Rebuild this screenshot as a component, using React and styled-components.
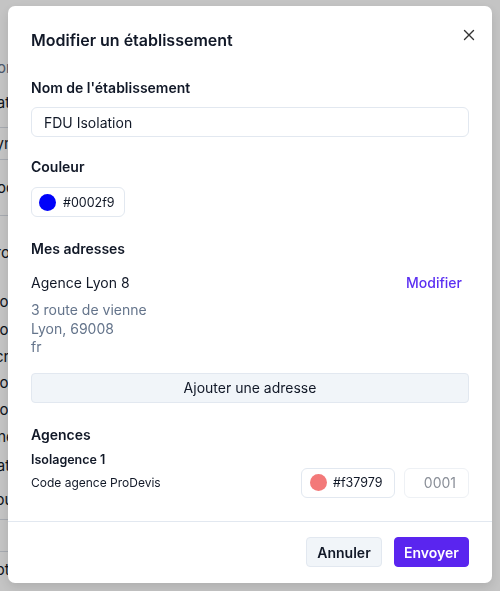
import styled, { createGlobalStyle } from 'styled-components'

const GlobalStyle = createGlobalStyle`
  * { box-sizing: border-box; }
  html, body {
    margin: 0;
    padding: 0;
    height: 100%;
    overflow: hidden;
    font-family: 'Inter', 'Noto Sans', sans-serif;
    color: #111827;
    background: #ffffff;
  }
`

const Page = styled.div`
  display: flex;
  flex-direction: column;
  padding-top: 56px;
  margin-left: -14px;
  width: 200px;
`

const PageRow = styled.div`
  height: ${(props) => props.h}px;
  display: flex;
  align-items: center;
  font-size: 15px;
  color: ${(props) => (props.muted ? '#64748b' : '#111827')};
  border-bottom: ${(props) => (props.line ? '1px solid #d8dde5' : 'none')};
  white-space: nowrap;
`

const Overlay = styled.div`
  position: fixed;
  inset: 0;
  background: rgba(0, 0, 0, 0.23);
`

const Dialog = styled.div`
  position: fixed;
  left: 8px;
  top: 6px;
  width: 484px;
  height: 577px;
  background: #ffffff;
  border-radius: 7px;
  box-shadow: 0 4px 12px rgba(0, 0, 0, 0.12);
  display: flex;
  flex-direction: column;
`

const Body = styled.div`
  display: flex;
  flex-direction: column;
  padding: 22px 23px 0;
  flex: 1;
`

const Title = styled.h2`
  margin: 0;
  font-size: 16px;
  line-height: 24px;
  font-weight: 600;
`

const CloseButton = styled.button`
  position: absolute;
  top: 22px;
  right: 16px;
  width: 14px;
  height: 14px;
  padding: 0;
  border: none;
  background: none;
  display: flex;
  align-items: center;
  justify-content: center;
  cursor: pointer;
`

const Label = styled.div`
  margin-top: ${(props) => props.mt || 0}px;
  font-size: ${(props) => props.size || 14}px;
  line-height: ${(props) => props.lh || 20}px;
  font-weight: ${(props) => props.weight || 600};
  color: #111827;
`

const Input = styled.div`
  margin-top: 9px;
  height: 30px;
  border: 1px solid #e2e8f0;
  border-radius: 6px;
  padding: 0 12px;
  display: flex;
  align-items: center;
  font-size: 14px;
  color: #111827;
`

const ColorButton = styled.div`
  margin-top: ${(props) => props.mt || 0}px;
  width: 94px;
  height: 30px;
  border: 1px solid #e2e8f0;
  border-radius: 6px;
  padding: 0 ${(props) => props.pad || 7}px;
  display: flex;
  align-items: center;
  gap: ${(props) => props.gap || 7}px;
  font-size: 12.5px;
  color: #111827;
  flex-shrink: 0;
`

const Swatch = styled.span`
  width: 17px;
  height: 17px;
  border-radius: 50%;
  background: ${(props) => props.color};
  flex-shrink: 0;
`

const AddressHead = styled.div`
  margin-top: 14px;
  display: flex;
  justify-content: space-between;
  align-items: center;
  font-size: 14px;
  line-height: 20px;
`

const LinkButton = styled.span`
  color: #5b2ff2;
  font-weight: 500;
  margin-right: 7px;
  cursor: pointer;
`

const AddressLines = styled.div`
  margin-top: 8px;
  font-size: 14px;
  line-height: 18.5px;
  color: #64748b;
`

const WideButton = styled.button`
  margin-top: 16px;
  height: 30px;
  width: 100%;
  border: 1px solid #e2e8f0;
  border-radius: 4px;
  background: #f1f5f9;
  font-family: inherit;
  font-size: 14px;
  color: #111827;
  cursor: pointer;
`

const AgencyRow = styled.div`
  display: flex;
  align-items: center;
  gap: 9px;
  font-size: 12px;
`

const AgencyName = styled.span`
  flex: 1;
`

const CodeInput = styled.div`
  width: 65px;
  height: 30px;
  border: 1px solid #eef1f5;
  border-radius: 6px;
  padding: 0 12px;
  display: flex;
  align-items: center;
  justify-content: flex-end;
  font-size: 14px;
  color: #8a8f98;
`

const Footer = styled.div`
  border-top: 1px solid #e2e8f0;
  padding: 15px 23px 16px;
  display: flex;
  justify-content: flex-end;
  gap: 12px;
`

const FooterButton = styled.button`
  height: 30px;
  padding: 0 ${(props) => (props.primary ? 9 : 10)}px;
  min-width: ${(props) => (props.primary ? 75 : 76)}px;
  border-radius: 4px;
  font-family: inherit;
  font-size: 14px;
  font-weight: 600;
  cursor: pointer;
  border: 1px solid ${(props) => (props.primary ? '#5a25ef' : '#e2e8f0')};
  background: ${(props) => (props.primary ? '#5a25ef' : '#f1f5f9')};
  color: ${(props) => (props.primary ? '#ffffff' : '#111827')};
`

const bgRows = [
  { t: 'Contrat', h: 22, muted: true },
  { t: "Date de l'", h: 50, line: true },
  { t: 'Symbol', h: 32, line: true },
  { t: 'Code', h: 56, line: true },
  { t: 'Profil', h: 72 },
  { t: 'Modif', h: 27 },
  { t: 'Modif', h: 28 },
  { t: 'Ecran', h: 26 },
  { t: 'Modif', h: 27 },
  { t: 'Mod', h: 27 },
  { t: 'Une', h: 27 },
  { t: 'Data', h: 30 },
  { t: 'Pour', h: 40, line: true },
  { t: '', h: 32, line: true },
  { t: 'Bot', h: 34 },
]

export default function App() {
  return (
    <>
      <GlobalStyle />
      <Page>
        {bgRows.map((r, i) => (
          <PageRow key={i} h={r.h} muted={r.muted} line={r.line}>
            {r.t}
          </PageRow>
        ))}
      </Page>
      <Overlay />
      <Dialog>
        <CloseButton aria-label="Fermer">
          <svg width="12" height="12" viewBox="0 0 12 12">
            <path d="M1.5 1.5L10.5 10.5M10.5 1.5L1.5 10.5" stroke="#333" strokeWidth="1.4" strokeLinecap="round" />
          </svg>
        </CloseButton>
        <Body>
          <Title>Modifier un établissement</Title>

          <Label mt={26}>Nom de l'établissement</Label>
          <Input>FDU Isolation</Input>

          <Label mt={20}>Couleur</Label>
          <ColorButton mt={10}>
            <Swatch color="#0002f9" />
            #0002f9
          </ColorButton>

          <Label mt={22}>Mes adresses</Label>
          <AddressHead>
            <span>Agence Lyon 8</span>
            <LinkButton>Modifier</LinkButton>
          </AddressHead>
          <AddressLines>
            <div>3 route de vienne</div>
            <div>Lyon, 69008</div>
            <div>fr</div>
          </AddressLines>
          <WideButton>Ajouter une adresse</WideButton>

          <Label mt={22}>Agences</Label>
          <Label mt={7} size={12.5} lh={16}>Isolagence 1</Label>
          <AgencyRow>
            <AgencyName>Code agence ProDevis</AgencyName>
            <ColorButton pad={8} gap={6}>
              <Swatch color="#f37979" />
              #f37979
            </ColorButton>
            <CodeInput>0001</CodeInput>
          </AgencyRow>
        </Body>
        <Footer>
          <FooterButton>Annuler</FooterButton>
          <FooterButton primary>Envoyer</FooterButton>
        </Footer>
      </Dialog>
    </>
  )
}
